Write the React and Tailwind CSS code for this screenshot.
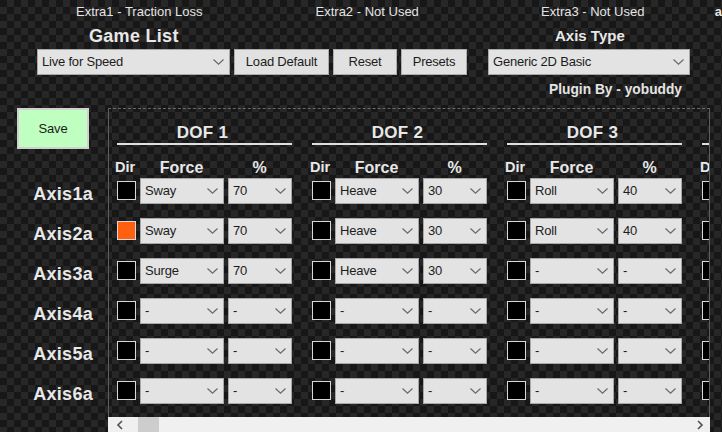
function Chevron() {
  return (
    <svg width="11" height="6" viewBox="0 0 11 6" fill="none" className="shrink-0">
      <path d="M0.5 0.5 L5.5 5.2 L10.5 0.5" stroke="#6a6a6a" strokeWidth="1.2" />
    </svg>
  )
}

function Combo({ value, className = '' }) {
  return (
    <div className={`flex h-[26px] shrink-0 items-center justify-between border border-[#a8a8a8] bg-[#e3e3e3] pr-[5px] pl-[4px] text-[13px] tracking-[-0.2px] text-[#1c1c1c] ${className}`}>
      <span>{value}</span>
      <Chevron />
    </div>
  )
}

function Button({ children, className = '' }) {
  return (
    <div className={`flex h-[26px] shrink-0 items-center justify-center border border-[#adadad] bg-[#e1e1e1] text-[13px] tracking-[-0.2px] text-[#1c1c1c] ${className}`}>
      {children}
    </div>
  )
}

function DirBox({ on }) {
  return <div className={`mt-[3px] h-[19px] w-[19px] shrink-0 border border-[#d8d8d8] ${on ? 'bg-[#ff6010]' : 'bg-black'}`} />
}

const rows = [
  { axis: 'Axis1a', on: false, dof: [['Sway', '70'], ['Heave', '30'], ['Roll', '40']] },
  { axis: 'Axis2a', on: true, dof: [['Sway', '70'], ['Heave', '30'], ['Roll', '40']] },
  { axis: 'Axis3a', on: false, dof: [['Surge', '70'], ['Heave', '30'], ['-', '-']] },
  { axis: 'Axis4a', on: false, dof: [['-', '-'], ['-', '-'], ['-', '-']] },
  { axis: 'Axis5a', on: false, dof: [['-', '-'], ['-', '-'], ['-', '-']] },
  { axis: 'Axis6a', on: false, dof: [['-', '-'], ['-', '-'], ['-', '-']] },
]

export default function App() {
  return (
    <div className="flex h-[432px] w-[722px] flex-col overflow-hidden bg-[repeating-conic-gradient(#272727_0_25%,#171717_0_50%)] bg-[length:14px_14px] font-['Liberation_Sans',Arial,sans-serif]">
      <div className="flex h-[24px] shrink-0 items-center text-[13px] whitespace-nowrap text-[#e4e4e4]">
        <span className="ml-[76px] w-[240px]">Extra1 - Traction Loss</span>
        <span className="w-[226px]">Extra2 - Not Used</span>
        <span className="w-[174px]">Extra3 - Not Used</span>
        <span className="font-bold">a</span>
      </div>
      <div className="flex h-[25px] shrink-0 items-center font-bold whitespace-nowrap text-[#e8e8e8]">
        <span className="ml-[89px] w-[466px] text-[18px] tracking-[0.3px]">Game List</span>
        <span className="text-[15px]">Axis Type</span>
      </div>
      <div className="flex shrink-0 gap-[4px] pl-[37px]">
        <Combo value="Live for Speed" className="w-[193px]" />
        <Button className="w-[95px]">Load Default</Button>
        <Button className="w-[64px]">Reset</Button>
        <Button className="w-[66px]">Presets</Button>
        <Combo value="Generic 2D Basic" className="ml-[17px] w-[202px]" />
      </div>
      <div className="mt-[5px] flex h-[20px] shrink-0 items-center justify-end pr-[40px] text-[13.75px] font-bold text-[#e4e4e4]">
        Plugin By - yobuddy
      </div>
      <div className="mt-[8px] flex min-h-0 flex-1">
        <div className="flex w-[108px] shrink-0 flex-col pl-[17px]">
          <Button className="h-[41px]! w-[72px] border-2! border-[#d0d0d0]! bg-[#bfffbf]!">Save</Button>
          <div className="mt-[25px] flex flex-col">
            {rows.map((r) => (
              <div key={r.axis} className="flex h-[40px] items-center justify-end pr-[15px] text-[18px] font-bold tracking-[0.3px] text-[#e8e8e8]">
                {r.axis}
              </div>
            ))}
          </div>
        </div>
        <div className="flex w-[602px] shrink-0 flex-col">
          <div className="h-[309px] overflow-hidden border-x border-t border-x-[#5e5e5e] border-t-[#6a6a6a] border-dashed pl-[8px] [border-left-style:solid] [border-right-style:solid]">
            <div className="flex w-[800px] gap-[20px] pt-[15px] text-[#e8e8e8]">
              {['DOF 1', 'DOF 2', 'DOF 3', ''].map((label, i) => (
                <div key={i} className="w-[175px] shrink-0">
                  <div className="h-[18px] pr-[4px] text-center text-[17px] leading-[18px] font-bold tracking-[0.3px]">{label}</div>
                  <div className="mt-px h-[2px] bg-[#e0e0e0]" />
                </div>
              ))}
            </div>
            <div className="mt-[12px] -ml-[2px] flex h-[21px] w-[800px] items-center text-[16px] font-bold text-[#e8e8e8]">
              {[1, 2, 3, 4].map((n) => (
                <div key={n} className="flex w-[195px] shrink-0 items-center">
                  <span className="w-[26px] text-[14.5px]">Dir</span>
                  <span className="w-[81px] text-center">Force</span>
                  <span className="w-[75px] text-center">%</span>
                </div>
              ))}
            </div>
            {rows.map((r) => (
              <div key={r.axis} className="flex h-[40px] w-[800px] items-start">
                {r.dof.map(([force, pct], i) => (
                  <div key={i} className="flex w-[195px] shrink-0 items-start">
                    <DirBox on={r.on && i === 0} />
                    <Combo value={force} className="ml-[4px] w-[84px]" />
                    <Combo value={pct} className="ml-[4px] w-[64px]" />
                  </div>
                ))}
                <DirBox />
              </div>
            ))}
          </div>
          <div className="flex h-[15px] shrink-0 items-center bg-[#f0f0f0] pr-[6px] pl-[8px]">
            <svg width="7" height="10" viewBox="0 0 7 10" fill="none"><path d="M6 1 L2 5 L6 9" stroke="#505050" strokeWidth="1.6" /></svg>
            <div className="ml-[15px] h-full w-[21px] bg-[#cdcdcd]" />
            <svg width="7" height="10" viewBox="0 0 7 10" fill="none" className="ml-auto"><path d="M1 1 L5 5 L1 9" stroke="#505050" strokeWidth="1.6" /></svg>
          </div>
        </div>
      </div>
    </div>
  )
}
